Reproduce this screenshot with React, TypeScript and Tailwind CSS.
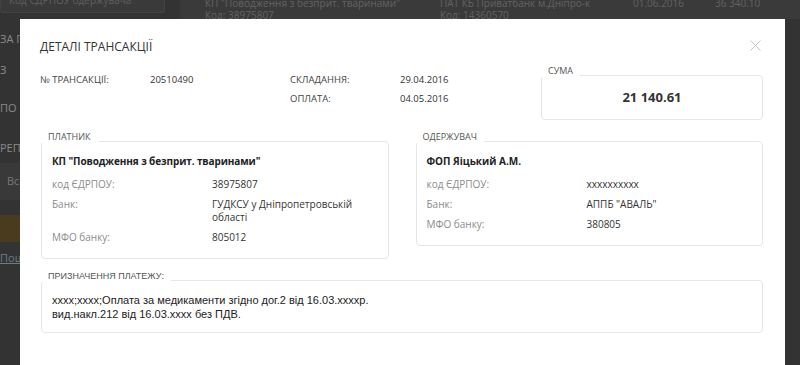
export default function App() {
  const fieldLabel = "w-[160px] shrink-0 text-[#8c8c8c]";
  const fieldValue = "w-[150px] text-[#333]";
  return (
    <div className="relative w-[800px] h-[365px] overflow-hidden bg-[#333333] font-['Open_Sans',sans-serif]">
      {/* background page */}
      <div className="flex">
        <div className="w-[180px] shrink-0">
          <div className="h-[13px] w-[165px] overflow-hidden rounded-b-[3px] border border-t-0 border-[#424242] bg-[#3a3a3a]">
            <div className="-mt-[7px] pl-[8px] text-[10px] leading-[14px] text-[#5f5f5f]">Код ЄДРПОУ одержувача</div>
          </div>
          <div className="w-[20px] overflow-hidden whitespace-nowrap">
            <div className="mt-[19px] text-[11px] leading-[14px] text-[#8a8a8a]">ЗА ПЕРІОД</div>
            <div className="mt-[17px] text-[11px] leading-[14px] text-[#8a8a8a]">З</div>
            <div className="mt-[24px] text-[11px] leading-[14px] text-[#8a8a8a]">ПО</div>
            <div className="mt-[26px] text-[11px] leading-[14px] text-[#8a8a8a]">РЕПОРТ</div>
            <div className="mt-[8px] flex h-[37px] items-center bg-[#393939] pl-[7px] text-[11px] text-[#777]">Всі</div>
            <div className="mt-[15px] h-[27px] bg-[#4a3b1e]" />
            <div className="mt-[9px] text-[11px] leading-[14px] text-[#6e7c8a] underline">Пошук</div>
          </div>
        </div>
        <div className="flex h-[19px] flex-1 overflow-hidden bg-[#3a3a3a] text-[10px] leading-[12px] text-[#636363]">
          <div className="-mt-[3px] w-[260px] shrink-0 pl-[25px]">
            <div>КП "Поводження з безприт. тваринами"</div>
            <div>Код: 38975807</div>
          </div>
          <div className="-mt-[3px] w-[193px] shrink-0">
            <div>ПАТ КБ Приватбанк м.Дніпро-к</div>
            <div>Код: 14360570</div>
          </div>
          <div className="-mt-[3px] w-[82px] shrink-0">01.06.2016</div>
          <div className="-mt-[3px] shrink-0">36 340.10</div>
        </div>
      </div>

      {/* modal */}
      <div className="absolute left-[20px] top-[19px] h-[360px] w-[765px] bg-white pl-[21px] pr-[22px] pt-[20px]">
        <button className="absolute right-[24px] top-[21px] h-[11px] w-[11px]" aria-label="close">
          <svg width="11" height="11" viewBox="0 0 11 11" className="block">
            <path d="M0.5 0.5L10.5 10.5M10.5 0.5L0.5 10.5" stroke="#c4c4c4" strokeWidth="1" fill="none" />
          </svg>
        </button>
        <div className="-ml-px text-[12px] leading-[16px] text-[#333]">ДЕТАЛІ ТРАНСАКЦІЇ</div>

        <div className="mt-[18px] flex items-start">
          <div className="-ml-px grid flex-1 grid-cols-[110px_140px_110px_1fr] gap-y-[5px] text-[9.5px] leading-[14px]">
            <div className="text-[#444]">№ ТРАНСАКЦІЇ:</div>
            <div className="text-[#333]">20510490</div>
            <div className="text-[#444]">СКЛАДАННЯ:</div>
            <div className="text-[#333]">29.04.2016</div>
            <div />
            <div />
            <div className="text-[#444]">ОПЛАТА:</div>
            <div className="text-[#333]">04.05.2016</div>
          </div>
          <div className="relative mt-[2px] flex h-[45px] w-[222px] items-center justify-center rounded-[4px] border border-[#e6e6e6] bg-white">
            <span className="absolute -left-px -top-[11px] bg-white pl-[7px] pr-[7px] text-[9px] leading-[12px] text-[#555]">СУМА</span>
            <span className="text-[13px] font-bold text-[#333]">21 140.61</span>
          </div>
        </div>

        <div className="mt-[21px] grid grid-cols-2 items-start gap-x-[27px] text-[10px] leading-[13px]">
          <div className="relative rounded-[4px] border border-[#e6e6e6] bg-white px-[10px] pb-[14px] pt-[13px]">
            <span className="absolute -left-px -top-[11px] bg-white pl-[7px] pr-[8px] text-[9px] leading-[12px] text-[#555]">ПЛАТНИК</span>
            <div className="font-bold tracking-[-0.1px] text-[#222]">КП "Поводження з безприт. тваринами"</div>
            <div className="mt-[10px] flex flex-col gap-[7px]">
              <div className="flex">
                <div className={fieldLabel}>код ЄДРПОУ:</div>
                <div className={fieldValue}>38975807</div>
              </div>
              <div className="flex">
                <div className={fieldLabel}>Банк:</div>
                <div className={fieldValue}>ГУДКСУ у Дніпропетровській області</div>
              </div>
              <div className="flex">
                <div className={fieldLabel}>МФО банку:</div>
                <div className={fieldValue}>805012</div>
              </div>
            </div>
          </div>
          <div className="relative rounded-[4px] border border-[#e6e6e6] bg-white px-[10px] pb-[14px] pt-[13px]">
            <span className="absolute -left-px -top-[11px] bg-white pl-[7px] pr-[7px] text-[9px] leading-[12px] text-[#555]">ОДЕРЖУВАЧ</span>
            <div className="font-bold text-[#222]">ФОП Яіцький А.М.</div>
            <div className="mt-[10px] flex flex-col gap-[7px]">
              <div className="flex">
                <div className={fieldLabel}>код ЄДРПОУ:</div>
                <div className={fieldValue}>xxxxxxxxxx</div>
              </div>
              <div className="flex">
                <div className={fieldLabel}>Банк:</div>
                <div className={fieldValue}>АППБ "АВАЛЬ"</div>
              </div>
              <div className="flex">
                <div className={fieldLabel}>МФО банку:</div>
                <div className={fieldValue}>380805</div>
              </div>
            </div>
          </div>
        </div>

        <div className="relative mt-[21px] rounded-[4px] border border-[#e6e6e6] bg-white px-[10px] pb-[11px] pt-[12px] font-['Liberation_Sans',Arial,sans-serif] text-[11px] leading-[14px] text-[#222]">
          <span className="absolute -left-px -top-[11px] bg-white pl-[7px] pr-[7px] font-['Liberation_Sans',Arial,sans-serif] text-[9px] leading-[12px] text-[#555]">ПРИЗНАЧЕННЯ ПЛАТЕЖУ:</span>
          xxxx;xxxx;Оплата за медикаменти згідно дог.2 від 16.03.xxxxр.
          <br />
          вид.накл.212 від 16.03.xxxx без ПДВ.
        </div>
      </div>
    </div>
  );
}
